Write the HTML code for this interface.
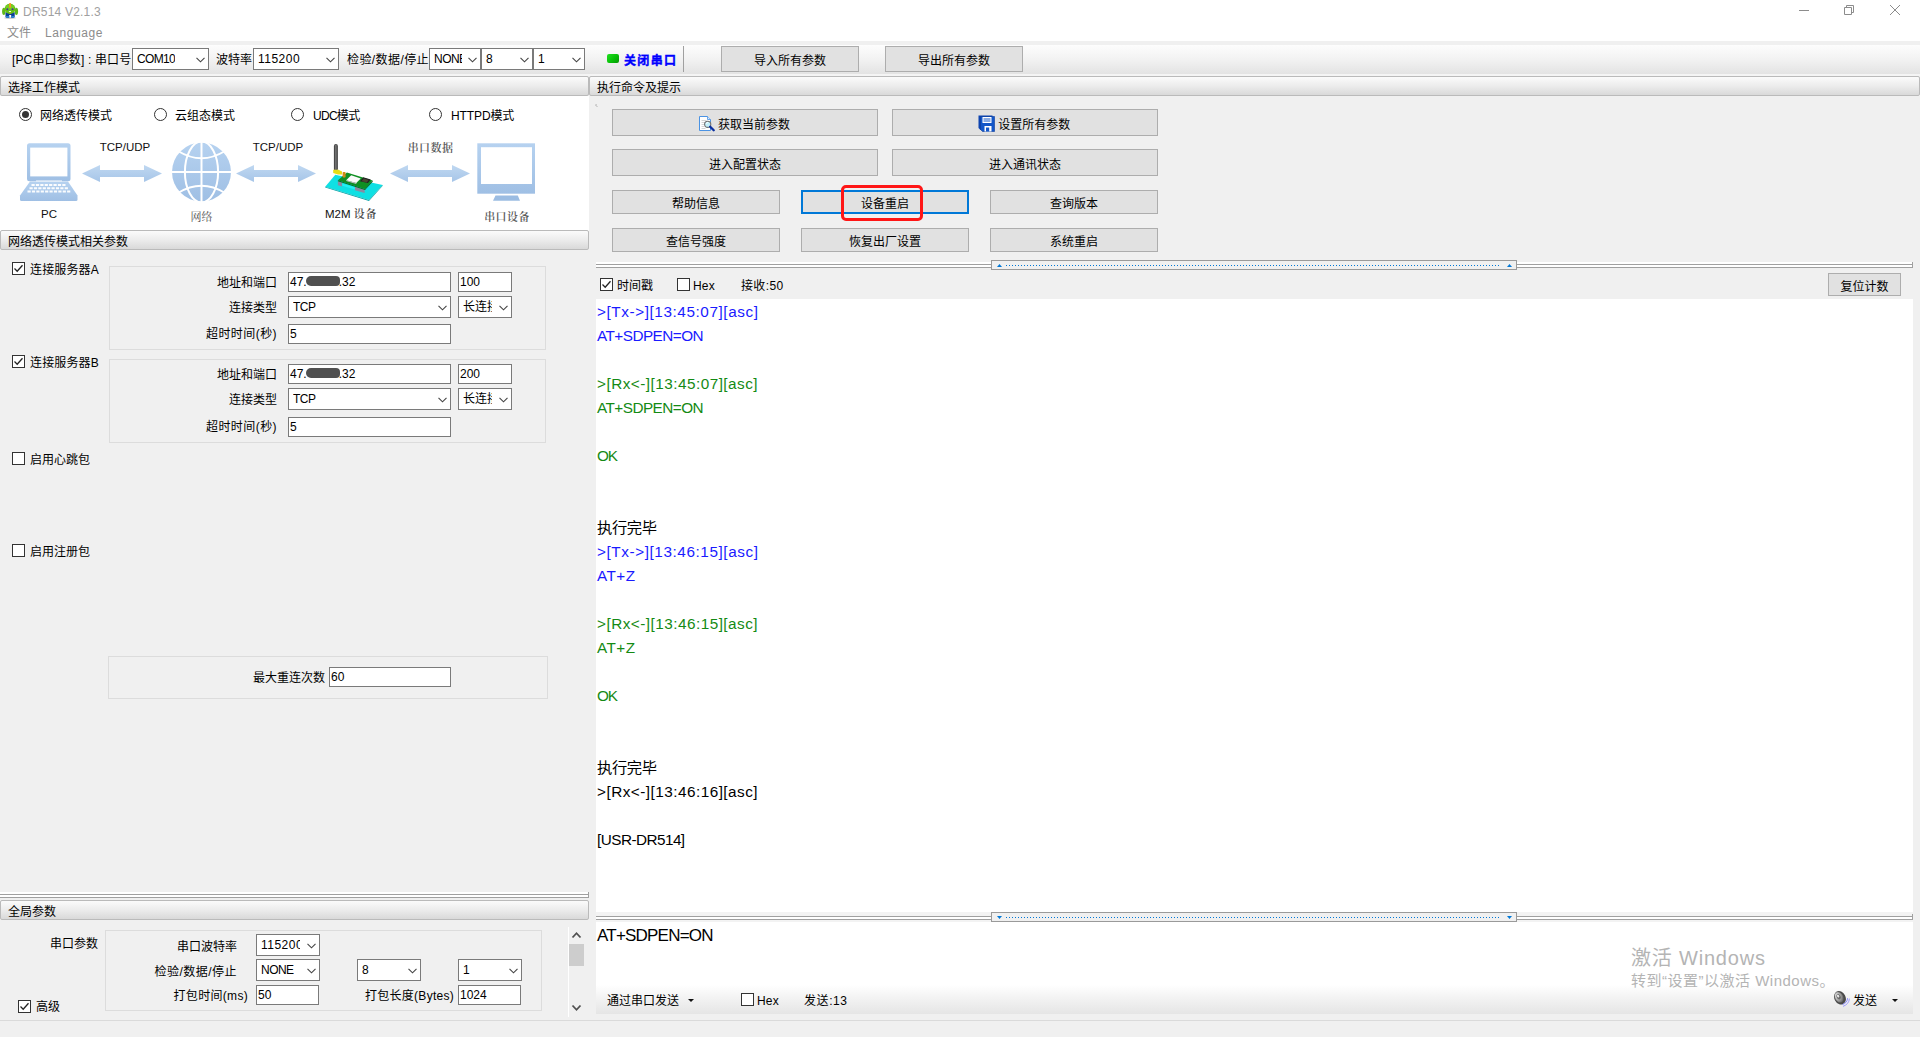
<!DOCTYPE html>
<html lang="zh-CN">
<head>
<meta charset="utf-8">
<title>DR514 V2.1.3</title>
<style>
html,body{margin:0;padding:0;}
body{width:1920px;height:1037px;position:relative;overflow:hidden;background:#f0f0f0;
 font-family:"Liberation Sans","Noto Sans CJK SC",sans-serif;font-size:12px;color:#000;}
.a{position:absolute;white-space:nowrap;}
.t{position:absolute;white-space:nowrap;font-size:12px;line-height:16px;height:16px;}
.hdr{position:absolute;height:18px;border:1px solid #bababa;border-radius:2px;
 background:linear-gradient(#fbfbfb,#ececec 50%,#d9d9d9);box-sizing:content-box;}
.hdr span{position:absolute;left:7px;top:3px;line-height:16px;font-size:12px;white-space:nowrap;}
.btn{position:absolute;box-sizing:border-box;border:1px solid #adadad;background:#e1e1e1;
 text-align:center;font-size:12px;white-space:nowrap;}
.inp{position:absolute;box-sizing:border-box;border:1px solid #7a7a7a;background:#fff;
 font-size:12px;white-space:nowrap;overflow:hidden;}
.inp span{position:absolute;left:1px;top:1px;line-height:16px;white-space:nowrap;}
.cmb span{left:4px;top:2px;overflow:hidden;}
.cmb svg{position:absolute;right:3.5px;top:8px;}
.cb{position:absolute;width:13px;height:13px;box-sizing:border-box;border:1px solid #333;background:#fff;}
.rd{position:absolute;width:13px;height:13px;box-sizing:border-box;border:1px solid #333;border-radius:50%;background:#fff;}
.rd i{position:absolute;left:2px;top:2px;width:7px;height:7px;border-radius:50%;background:#333;}
.blur{display:inline-block;width:34px;height:10px;border-radius:5px 4px 4px 5px;background:#505050;vertical-align:0px;margin:0 -1px;filter:blur(.6px);}
.grp{position:absolute;box-sizing:border-box;border:1px solid #dcdcdc;}
.log{position:absolute;left:597px;font-size:15.3px;line-height:24px;height:24px;white-space:nowrap;}
.b{color:#1a1aff;}
.g{color:#148a14;}
</style>
</head>
<body>
<!-- title bar and menu -->
<div class="a" style="left:0px;top:0px;width:1920px;height:41px;background:#fff;"></div>
<svg class="a" style="left:1px;top:2px;" width="18" height="18" viewBox="1 2 18 18">
<ellipse cx="10" cy="18" rx="6" ry="0.8" fill="#000" opacity=".25"/>
<ellipse cx="3.8" cy="11.3" rx="1.7" ry="3.6" fill="#5fb818"/>
<ellipse cx="16.4" cy="11.3" rx="1.7" ry="3.6" fill="#5fb818"/>
<path d="M5.5 12.3 H14.7 V16.5 Q14.7 17.8 13.2 17.8 H11.2 V15 H9.2 V17.8 H7 Q5.5 17.8 5.5 16.5 Z" fill="#0b3f94"/>
<path d="M5.6 16 H9.2 V17.8 H7 Q5.6 17.8 5.6 16.6 Z M11.2 16 H14.6 V16.6 Q14.6 17.8 13.2 17.8 H11.2 Z" fill="#2a7fd0"/>
<ellipse cx="10" cy="8.8" rx="5.4" ry="5.1" fill="#63c116"/>
<ellipse cx="10" cy="7" rx="4.2" ry="2.8" fill="#7ed02a" opacity=".7"/>
<rect x="9.1" y="3" width="1.9" height="4.8" rx=".6" fill="#f39a1e"/>
<circle cx="7.4" cy="9.2" r="1" fill="#4a2aa0"/><circle cx="12.5" cy="9.2" r="1" fill="#4a2aa0"/>
<rect x="8.9" y="11.1" width="2.1" height=".9" fill="#fff"/>
<rect x="9.6" y="12.2" width=".9" height="1.6" fill="#d8a018"/>
</svg>
<div class="a t" style="letter-spacing:0.21px;left:23px;top:4px;color:#a0a0a0;">DR514 V2.1.3</div>
<div class="t" style="left:7px;top:25px;color:#8c8c8c;">文件</div>
<div class="t" style="letter-spacing:0.59px;left:45px;top:25px;color:#8c8c8c;">Language</div>
<svg class="a" style="left:1790px;top:0;" width="130" height="22" viewBox="0 0 130 22" fill="none" stroke="#8c8c8c" stroke-width="1">
<path d="M9 10.5 H19"/>
<path d="M54.5 7.5 H61.5 V14.5 H54.5 Z"/><path d="M56.5 7.5 V5.5 H63.5 V12.5 H61.5"/>
<path d="M100 5 L110 15 M110 5 L100 15"/>
</svg>
<!-- toolbar -->
<div class="a" style="left:0px;top:45px;width:1920px;height:29px;background:linear-gradient(#fdfdfd,#f2f2f2 50%,#e3e3e3);"></div>
<div class="a" style="left:0px;top:74px;width:1920px;height:2px;background:#f4f4f4;"></div>
<div class="t" style="letter-spacing:0.14px;left:12px;top:52px;">[PC串口参数] : 串口号</div>
<div class="inp cmb" style="left:132px;top:48px;width:77px;height:22px;"><span style=""><b style="letter-spacing:-0.68px;font-weight:normal;">COM10</b></span><svg width="9" height="6" viewBox="0 0 9 6"><path d="M0.5 0.8 L4.5 4.8 L8.5 0.8" fill="none" stroke="#444" stroke-width="1.1"/></svg></div>
<div class="t" style="left:216px;top:52px;">波特率</div>
<div class="inp cmb" style="left:253px;top:48px;width:86px;height:22px;"><span style=""><b style="letter-spacing:0.48px;font-weight:normal;">115200</b></span><svg width="9" height="6" viewBox="0 0 9 6"><path d="M0.5 0.8 L4.5 4.8 L8.5 0.8" fill="none" stroke="#444" stroke-width="1.1"/></svg></div>
<div class="t" style="letter-spacing:0.42px;left:347px;top:52px;">检验/数据/停止</div>
<div class="inp cmb" style="left:429px;top:48px;width:52px;height:22px;"><span style="width:28px;"><b style="letter-spacing:-0.53px;font-weight:normal;">NONE</b></span><svg width="9" height="6" viewBox="0 0 9 6"><path d="M0.5 0.8 L4.5 4.8 L8.5 0.8" fill="none" stroke="#444" stroke-width="1.1"/></svg></div>
<div class="inp cmb" style="left:481px;top:48px;width:52px;height:22px;"><span style=""><b style="font-weight:normal;">8</b></span><svg width="9" height="6" viewBox="0 0 9 6"><path d="M0.5 0.8 L4.5 4.8 L8.5 0.8" fill="none" stroke="#444" stroke-width="1.1"/></svg></div>
<div class="inp cmb" style="left:533px;top:48px;width:52px;height:22px;"><span style=""><b style="font-weight:normal;">1</b></span><svg width="9" height="6" viewBox="0 0 9 6"><path d="M0.5 0.8 L4.5 4.8 L8.5 0.8" fill="none" stroke="#444" stroke-width="1.1"/></svg></div>
<div class="a" style="left:607px;top:54px;width:12px;height:9px;background:linear-gradient(135deg,#22e022,#08c008 55%,#069806);border-radius:2px;"></div>
<div class="t" style="letter-spacing:1.37px;left:624px;top:53px;color:#0000ff;font-weight:bold;-webkit-text-stroke:0.35px #0000ff;">关闭串口</div>
<div class="a" style="left:683px;top:46px;width:1px;height:26px;background:#a0a0a0;"></div>
<div class="btn" style="left:721px;top:46px;width:138px;height:26px;line-height:29px;">导入所有参数</div>
<div class="btn" style="left:885px;top:46px;width:138px;height:26px;line-height:29px;">导出所有参数</div>
<!-- section headers -->
<div class="hdr" style="left:0px;top:76px;width:587px;"><span>选择工作模式</span></div>
<div class="hdr" style="left:589px;top:76px;width:1329px;"><span>执行命令及提示</span></div>
<div class="a" style="left:0px;top:96px;width:589px;height:135px;background:#fff;"></div>
<div class="hdr" style="left:0px;top:230px;width:587px;"><span>网络透传模式相关参数</span></div>
<!-- mode radios -->
<div class="rd" style="left:19px;top:108px;"><i></i></div>
<div class="t" style="left:40px;top:108px;">网络透传模式</div>
<div class="rd" style="left:154px;top:108px;"></div>
<div class="t" style="left:175px;top:108px;">云组态模式</div>
<div class="rd" style="left:291px;top:108px;"></div>
<div class="t" style="letter-spacing:-0.71px;left:313px;top:108px;">UDC模式</div>
<div class="rd" style="left:429px;top:108px;"></div>
<div class="t" style="letter-spacing:-0.11px;left:451px;top:108px;">HTTPD模式</div>
<!-- diagram -->
<svg class="a" style="left:0;top:96px;" width="589" height="134" viewBox="0 96 589 134">
<defs>
<linearGradient id="ag" x1="0" y1="0" x2="0" y2="1"><stop offset="0" stop-color="#c0d8f1"/><stop offset="1" stop-color="#a6c5e8"/></linearGradient>
<linearGradient id="bg" x1="0" y1="0" x2="0" y2="1"><stop offset="0" stop-color="#b6d2f0"/><stop offset="1" stop-color="#9fbfe4"/></linearGradient>
</defs>
<!-- laptop -->
<rect x="27" y="143.3" width="43.5" height="38" rx="2.5" fill="url(#bg)"/>
<rect x="30.2" y="147.6" width="37.2" height="28.8" fill="#fff"/>
<path d="M30 181.5 L68 181.5 L77.5 195.5 L77.5 199.5 Q77.5 201 76 201 L21.5 201 Q20 201 20 199.5 L20 195.5 Z" fill="url(#bg)"/>
<rect x="36" y="180.3" width="26" height="1.2" fill="#fff" opacity=".7"/>
<g stroke="#fff" stroke-width="2" stroke-dasharray="3.2 1.2" opacity=".95">
<line x1="31.5" y1="185" x2="66.5" y2="185"/>
<line x1="29.5" y1="188.3" x2="68.5" y2="188.3"/>
<line x1="27.5" y1="191.6" x2="70.5" y2="191.6"/>
</g>
<!-- globe -->
<circle cx="201.5" cy="172" r="29.5" fill="url(#bg)"/>
<g fill="none" stroke="#fff" stroke-width="2">
<line x1="201.5" y1="142" x2="201.5" y2="202"/>
<line x1="171.5" y1="172" x2="231.5" y2="172"/>
<ellipse cx="201.5" cy="172" rx="16.6" ry="30.5"/>
<path d="M178 151 Q201.5 165.5 225 151"/>
<path d="M178 193 Q201.5 178.5 225 193"/>
</g>
<!-- monitor -->
<rect x="477.3" y="143.3" width="57.7" height="50.4" fill="url(#bg)"/>
<rect x="481" y="147.2" width="51" height="36.8" fill="#fff"/>
<path d="M495.5 195.6 L517.8 195.6 L520 200.8 L493 200.8 Z" fill="#9bbce2"/>
<path d="M82 173.5 L100 165.0 L100 170.0 L144 170.0 L144 165.0 L162 173.5 L144 182.0 L144 177.0 L100 177.0 L100 182.0 Z" fill="url(#ag)"/>
<path d="M236 173.5 L254 165.0 L254 170.0 L298 170.0 L298 165.0 L316 173.5 L298 182.0 L298 177.0 L254 177.0 L254 182.0 Z" fill="url(#ag)"/>
<path d="M390 173.5 L408 165.0 L408 170.0 L452 170.0 L452 165.0 L470 173.5 L452 182.0 L452 177.0 L408 177.0 L408 182.0 Z" fill="url(#ag)"/>
<!-- m2m device -->
<path d="M325.2 186.7 L335.3 174.8 L382.7 184.9 L369 200.1 Z" fill="#0fe0e3"/>
<path d="M325.2 186.7 L369 200.1 L382.7 184.9 L382.7 185.8 L369 201 L325.2 187.6 Z" fill="#07a3a8"/>
<path d="M337.9 181.3 L342.2 182.6 L342.2 186.6 L337.9 185.2 Z" fill="#8a8aa2"/>
<path d="M354.9 186.5 L364.6 189.4 L364.6 193 L354.9 190.2 Z" fill="#8a8aa2"/>
<path d="M342.2 183.4 L354.9 187.3 L354.9 189.6 L342.2 185.8 Z" fill="#22f0f4"/>
<path d="M337.9 180.2 L346.9 172.6 L372.6 180.6 L365 188.9 Z" fill="#0f8f22"/>
<path d="M337.9 180.2 L365 188.9 L365 190 L337.9 181.3 Z" fill="#0a6a18"/>
<path d="M365 188.9 L372.6 180.6 L372.6 181.8 L365 190 Z" fill="#085a14"/>
<path d="M346.2 180.2 L351.2 175.2 L360.7 178.4 L356.3 183.1 Z" fill="#fafafa"/>
<path d="M346.2 180.2 L356.3 183.1 L356.3 183.9 L346.2 181 Z" fill="#c8c0d0"/>
<path d="M359.9 181.3 L363.2 177.3 L370.8 179.5 L367.9 183.1 Z" fill="#222"/>
<path d="M361.5 181.2 L363.8 178.6 L368.6 180 L366.8 182.4 Z" fill="#4a4430"/>
<rect x="333.9" y="144" width="4" height="27" rx="2" fill="#484848"/>
<rect x="335.2" y="145" width="1.3" height="25" fill="#7a7a7a"/>
<path d="M333.2 169.8 L338.5 169.8 L342 171.4 L342 174.6 L338 174.6 L333.2 173 Z" fill="#e6de14"/>
<rect x="342.6" y="172" width="3" height="5.6" rx=".8" fill="#d08a1c"/>
<g font-family="'Liberation Sans',sans-serif" font-size="11.5" fill="#111" text-anchor="middle">
<text x="125" y="151">TCP/UDP</text>
<text x="278" y="151">TCP/UDP</text>
<text x="49" y="217.8">PC</text>
</g>
<g font-family="'Liberation Serif','Noto Serif CJK SC',serif" font-size="11" fill="#555" text-anchor="middle">
<text x="201.5" y="221">网络</text>
<text x="430.5" y="152.3" letter-spacing="0.4" font-weight="600">串口数据</text>
<text x="507" y="221.3" letter-spacing="0.4" font-weight="600">串口设备</text>
</g>
<text x="325" y="217.8" font-family="'Liberation Sans',sans-serif" font-size="11.5" fill="#111">M2M <tspan font-family="'Liberation Serif','Noto Serif CJK SC',serif" font-size="11" fill="#444" letter-spacing="0.8" font-weight="600">设备</tspan></text>
</svg>
<!-- network params -->
<div class="grp" style="left:109px;top:266px;width:437px;height:84px;"></div>
<div class="cb" style="left:12px;top:262px;"><svg width="11" height="11" viewBox="0 0 11 11" style="position:absolute;left:0;top:0"><path d="M1.5 5.5 L4.2 8.2 L9.5 2.2" fill="none" stroke="#222" stroke-width="1.3"/></svg></div>
<div class="t" style="letter-spacing:0.14px;left:30px;top:262px;">连接服务器A</div>
<div class="t" style="right:1643px;top:275px;"><span>地址和端口</span></div>
<div class="inp" style="left:288px;top:272px;width:163px;height:20px;"><span>47.<b class="blur"></b>.32</span></div>
<div class="inp" style="left:458px;top:272px;width:54px;height:20px;"><span>100</span></div>
<div class="t" style="right:1643px;top:300px;"><span>连接类型</span></div>
<div class="inp cmb" style="left:288px;top:296px;width:163px;height:22px;"><span style=""><b style="letter-spacing:-0.48px;font-weight:normal;">TCP</b></span><svg width="9" height="6" viewBox="0 0 9 6"><path d="M0.5 0.8 L4.5 4.8 L8.5 0.8" fill="none" stroke="#444" stroke-width="1.1"/></svg></div>
<div class="inp cmb" style="left:458px;top:296px;width:54px;height:22px;"><span style="width:29px;"><b style="font-weight:normal;">长连接</b></span><svg width="9" height="6" viewBox="0 0 9 6"><path d="M0.5 0.8 L4.5 4.8 L8.5 0.8" fill="none" stroke="#444" stroke-width="1.1"/></svg></div>
<div class="t" style="right:1643px;top:326px;"><span style="letter-spacing:0.43px">超时时间(秒)</span></div>
<div class="inp" style="left:288px;top:324px;width:163px;height:20px;"><span>5</span></div>
<div class="grp" style="left:109px;top:359px;width:437px;height:84px;"></div>
<div class="cb" style="left:12px;top:355px;"><svg width="11" height="11" viewBox="0 0 11 11" style="position:absolute;left:0;top:0"><path d="M1.5 5.5 L4.2 8.2 L9.5 2.2" fill="none" stroke="#222" stroke-width="1.3"/></svg></div>
<div class="t" style="letter-spacing:0.14px;left:30px;top:355px;">连接服务器B</div>
<div class="t" style="right:1643px;top:367px;"><span>地址和端口</span></div>
<div class="inp" style="left:288px;top:364px;width:163px;height:20px;"><span>47.<b class="blur"></b>.32</span></div>
<div class="inp" style="left:458px;top:364px;width:54px;height:20px;"><span>200</span></div>
<div class="t" style="right:1643px;top:392px;"><span>连接类型</span></div>
<div class="inp cmb" style="left:288px;top:388px;width:163px;height:22px;"><span style=""><b style="letter-spacing:-0.48px;font-weight:normal;">TCP</b></span><svg width="9" height="6" viewBox="0 0 9 6"><path d="M0.5 0.8 L4.5 4.8 L8.5 0.8" fill="none" stroke="#444" stroke-width="1.1"/></svg></div>
<div class="inp cmb" style="left:458px;top:388px;width:54px;height:22px;"><span style="width:29px;"><b style="font-weight:normal;">长连接</b></span><svg width="9" height="6" viewBox="0 0 9 6"><path d="M0.5 0.8 L4.5 4.8 L8.5 0.8" fill="none" stroke="#444" stroke-width="1.1"/></svg></div>
<div class="t" style="right:1643px;top:419px;"><span style="letter-spacing:0.43px">超时时间(秒)</span></div>
<div class="inp" style="left:288px;top:417px;width:163px;height:20px;"><span>5</span></div>
<div class="cb" style="left:12px;top:452px;"></div>
<div class="t" style="left:30px;top:452px;">启用心跳包</div>
<div class="cb" style="left:12px;top:544px;"></div>
<div class="t" style="left:30px;top:544px;">启用注册包</div>
<div class="grp" style="left:108px;top:656px;width:440px;height:43px;"></div>
<div class="t" style="right:1595px;top:670px;"><span>最大重连次数</span></div>
<div class="inp" style="left:329px;top:667px;width:122px;height:20px;"><span>60</span></div>
<div class="a" style="left:0px;top:892px;width:589px;height:6px;background:#fff;border-right:1px solid #a0a0a0;box-sizing:border-box;"></div>
<div class="a" style="left:0px;top:894px;width:589px;height:1px;background:#a0a0a0;"></div>
<div class="a" style="left:0px;top:895px;width:588px;height:2px;background:#fff;"></div>
<div class="a" style="left:0px;top:897px;width:589px;height:1px;background:#a0a0a0;"></div>
<div class="hdr" style="left:0px;top:900px;width:587px;"><span>全局参数</span></div>
<div class="t" style="left:50px;top:936px;">串口参数</div>
<div class="grp" style="left:105px;top:930px;width:437px;height:81px;"></div>
<div class="t" style="right:1683px;top:939px;"><span>串口波特率</span></div>
<div class="inp cmb" style="left:256px;top:934px;width:64px;height:22px;"><span style="width:39px;"><b style="letter-spacing:0.48px;font-weight:normal;">115200</b></span><svg width="9" height="6" viewBox="0 0 9 6"><path d="M0.5 0.8 L4.5 4.8 L8.5 0.8" fill="none" stroke="#444" stroke-width="1.1"/></svg></div>
<div class="t" style="right:1683px;top:964px;"><span style="letter-spacing:0.48px">检验/数据/停止</span></div>
<div class="inp cmb" style="left:256px;top:959px;width:64px;height:22px;"><span style=""><b style="letter-spacing:-0.53px;font-weight:normal;">NONE</b></span><svg width="9" height="6" viewBox="0 0 9 6"><path d="M0.5 0.8 L4.5 4.8 L8.5 0.8" fill="none" stroke="#444" stroke-width="1.1"/></svg></div>
<div class="inp cmb" style="left:357px;top:959px;width:64px;height:22px;"><span style=""><b style="font-weight:normal;">8</b></span><svg width="9" height="6" viewBox="0 0 9 6"><path d="M0.5 0.8 L4.5 4.8 L8.5 0.8" fill="none" stroke="#444" stroke-width="1.1"/></svg></div>
<div class="inp cmb" style="left:458px;top:959px;width:64px;height:22px;"><span style=""><b style="font-weight:normal;">1</b></span><svg width="9" height="6" viewBox="0 0 9 6"><path d="M0.5 0.8 L4.5 4.8 L8.5 0.8" fill="none" stroke="#444" stroke-width="1.1"/></svg></div>
<div class="t" style="right:1672px;top:988px;"><span style="letter-spacing:0.31px">打包时间(ms)</span></div>
<div class="inp" style="left:256px;top:985px;width:63px;height:20px;"><span>50</span></div>
<div class="t" style="right:1466px;top:988px;"><span style="letter-spacing:0.27px">打包长度(Bytes)</span></div>
<div class="inp" style="left:458px;top:985px;width:63px;height:20px;"><span>1024</span></div>
<div class="cb" style="left:18px;top:1000px;"><svg width="11" height="11" viewBox="0 0 11 11" style="position:absolute;left:0;top:0"><path d="M1.5 5.5 L4.2 8.2 L9.5 2.2" fill="none" stroke="#222" stroke-width="1.3"/></svg></div>
<div class="t" style="left:36px;top:999px;">高级</div>
<div class="a" style="left:568px;top:927px;width:1px;height:90px;background:#fff;"></div>
<div class="a" style="left:569px;top:944px;width:15px;height:22px;background:#cdcdcd;"></div>
<svg class="a" style="left:571px;top:931px;" width="11" height="8" viewBox="0 0 11 8"><path d="M1.5 6.5 L5.5 2.2 L9.5 6.5" fill="none" stroke="#505050" stroke-width="1.8"/></svg>
<svg class="a" style="left:571px;top:1004px;" width="11" height="8" viewBox="0 0 11 8"><path d="M1.5 1.5 L5.5 5.8 L9.5 1.5" fill="none" stroke="#505050" stroke-width="1.8"/></svg>
<div class="a" style="left:0px;top:1020px;width:1920px;height:1px;background:#dadada;"></div>
<!-- command buttons -->
<div class="a" style="left:595px;top:104px;width:2px;height:2px;background:#cecece;border-radius:1px 0 0 0;"></div>
<div class="a" style="left:596px;top:106px;width:2px;height:1px;background:#d2d2d2;"></div>
<div class="btn" style="left:612px;top:109px;width:266px;height:27px;line-height:30px;"><svg width="16" height="16" viewBox="0 0 16 16" style="vertical-align:-3px;margin-right:3px;margin-left:-1px"><path d="M0.5 0.5 H8.5 L11.5 3.5 V14.5 H0.5 Z" fill="#fff" stroke="#4b93e3" stroke-width="1"/><path d="M8.5 0.5 V3.5 H11.5" fill="#dbe9fa" stroke="#4b93e3" stroke-width=".8"/><path d="M2.5 4.5h5M2.5 6.5h5M2.5 8.5h3M2.5 10.5h3M2.5 12.5h4" stroke="#d4d4d4" stroke-width="1"/><circle cx="8.7" cy="8.3" r="3.1" fill="#c4f0fb" stroke="#707070" stroke-width="1.1"/><path d="M7 7.5 L9 6.3" stroke="#fff" stroke-width="1"/><path d="M11.2 10.8 L14.7 14.3" stroke="#0a2fa0" stroke-width="2.3" stroke-linecap="round"/></svg>获取当前参数</div>
<div class="btn" style="left:892px;top:109px;width:266px;height:27px;line-height:30px;"><svg width="17" height="17" viewBox="0 0 17 17" style="vertical-align:-3px;margin-right:3px;margin-left:-1.5px"><path d="M0.5 0.5 H14.5 V13 L12.5 15 H2.5 L0.5 13 Z" fill="#0e44b0"/><path d="M2.5 1.5 H16.5 V16.5 H4.5 L2.5 14.5 Z" fill="#1256c8" stroke="#0a3a9a" stroke-width=".6"/><rect x="4.5" y="2" width="9" height="6" fill="#fff"/><path d="M5.5 4h7M5.5 6h7" stroke="#1256c8" stroke-width="1"/><rect x="6.5" y="11" width="7" height="5.5" fill="#fff"/><rect x="8" y="12.5" width="3.2" height="4" fill="#1256c8"/></svg>设置所有参数</div>
<div class="btn" style="left:612px;top:149px;width:266px;height:27px;line-height:30px;">进入配置状态</div>
<div class="btn" style="left:892px;top:149px;width:266px;height:27px;line-height:30px;">进入通讯状态</div>
<div class="btn" style="left:612px;top:190px;width:168px;height:24px;line-height:26px;">帮助信息</div>
<div class="btn" style="left:801px;top:190px;width:168px;height:24px;line-height:24px;border:2px solid #0078d7;">设备重启</div>
<div class="btn" style="left:990px;top:190px;width:168px;height:24px;line-height:26px;">查询版本</div>
<div class="btn" style="left:612px;top:228px;width:168px;height:24px;line-height:26px;">查信号强度</div>
<div class="btn" style="left:801px;top:228px;width:168px;height:24px;line-height:26px;">恢复出厂设置</div>
<div class="btn" style="left:990px;top:228px;width:168px;height:24px;line-height:26px;">系统重启</div>
<div class="a" style="left:841px;top:185px;width:82px;height:36px;box-sizing:border-box;border:3px solid #ff1616;border-radius:5px;"></div>
<div class="a" style="left:596px;top:262px;width:1317px;height:6px;background:#fff;border-right:1px solid #a0a0a0;box-sizing:border-box;"></div>
<div class="a" style="left:596px;top:264px;width:1317px;height:1px;background:#a0a0a0;"></div>
<div class="a" style="left:596px;top:265px;width:1316px;height:2px;background:#fff;"></div>
<div class="a" style="left:596px;top:267px;width:1317px;height:1px;background:#a0a0a0;"></div>
<div class="a" style="left:991px;top:260px;width:526px;height:10px;background:#f0f0f0;box-sizing:border-box;border:1px solid #9a9a9a;"></div>
<div class="a" style="left:1006px;top:265px;width:494px;height:1px;background:repeating-linear-gradient(90deg,#0078d7 0 1px,transparent 1px 3px);"></div>
<svg class="a" style="left:997px;top:264px;" width="5" height="3" viewBox="0 0 5 3"><path d="M0 3 L2.5 0 L5 3 Z" fill="#0078d7"/></svg>
<svg class="a" style="left:1507px;top:264px;" width="5" height="3" viewBox="0 0 5 3"><path d="M0 3 L2.5 0 L5 3 Z" fill="#0078d7"/></svg>
<div class="cb" style="left:600px;top:278px;"><svg width="11" height="11" viewBox="0 0 11 11" style="position:absolute;left:0;top:0"><path d="M1.5 5.5 L4.2 8.2 L9.5 2.2" fill="none" stroke="#222" stroke-width="1.3"/></svg></div>
<div class="t" style="left:617px;top:278px;">时间戳</div>
<div class="cb" style="left:677px;top:278px;"></div>
<div class="t" style="letter-spacing:0.18px;left:693px;top:278px;">Hex</div>
<div class="t" style="letter-spacing:0.36px;left:741px;top:278px;">接收:50</div>
<div class="btn" style="left:1828px;top:273px;width:73px;height:23px;line-height:26px;">复位计数</div>
<!-- log area -->
<div class="a" style="left:596px;top:299px;width:1317px;height:613px;background:#fff;"></div>
<div class="a" style="left:596px;top:912px;width:1317px;height:10px;background:#f3f3f3;"></div>
<div class="a" style="left:596px;top:922px;width:1317px;height:63px;background:#fff;"></div>
<div class="a" style="left:596px;top:985px;width:1317px;height:29px;background:linear-gradient(#fff,#f4f4f4 40%,#e5e5e5);"></div>
<div class="log b" style="letter-spacing:0.58px;left:597px;top:300px;">&gt;[Tx-&gt;][13:45:07][asc]</div>
<div class="log b" style="letter-spacing:-0.53px;left:597px;top:324px;">AT+SDPEN=ON</div>
<div class="log g" style="letter-spacing:0.48px;left:597px;top:372px;">&gt;[Rx&lt;-][13:45:07][asc]</div>
<div class="log g" style="letter-spacing:-0.53px;left:597px;top:396px;">AT+SDPEN=ON</div>
<div class="log g" style="letter-spacing:-1.14px;left:597px;top:444px;">OK</div>
<div class="log" style="letter-spacing:-0.4px;left:597px;top:516px;">执行完毕</div>
<div class="log b" style="letter-spacing:0.58px;left:597px;top:540px;">&gt;[Tx-&gt;][13:46:15][asc]</div>
<div class="log b" style="letter-spacing:0.46px;left:597px;top:564px;">AT+Z</div>
<div class="log g" style="letter-spacing:0.48px;left:597px;top:612px;">&gt;[Rx&lt;-][13:46:15][asc]</div>
<div class="log g" style="letter-spacing:0.46px;left:597px;top:636px;">AT+Z</div>
<div class="log g" style="letter-spacing:-1.14px;left:597px;top:684px;">OK</div>
<div class="log" style="letter-spacing:-0.4px;left:597px;top:756px;">执行完毕</div>
<div class="log" style="letter-spacing:0.48px;left:597px;top:780px;">&gt;[Rx&lt;-][13:46:16][asc]</div>
<div class="log" style="letter-spacing:-0.54px;left:597px;top:828px;">[USR-DR514]</div>
<div class="a" style="left:596px;top:914px;width:1317px;height:6px;background:#f3f3f3;border-right:1px solid #a0a0a0;box-sizing:border-box;"></div>
<div class="a" style="left:596px;top:916px;width:1317px;height:1px;background:#a0a0a0;"></div>
<div class="a" style="left:596px;top:917px;width:1316px;height:2px;background:#fff;"></div>
<div class="a" style="left:596px;top:919px;width:1317px;height:1px;background:#a0a0a0;"></div>
<div class="a" style="left:991px;top:912px;width:526px;height:10px;background:#f0f0f0;box-sizing:border-box;border:1px solid #9a9a9a;"></div>
<div class="a" style="left:1006px;top:917px;width:494px;height:1px;background:repeating-linear-gradient(90deg,#0078d7 0 1px,transparent 1px 3px);"></div>
<svg class="a" style="left:997px;top:916px;" width="5" height="3" viewBox="0 0 5 3"><path d="M0 0 L5 0 L2.5 3 Z" fill="#0078d7"/></svg>
<svg class="a" style="left:1507px;top:916px;" width="5" height="3" viewBox="0 0 5 3"><path d="M0 0 L5 0 L2.5 3 Z" fill="#0078d7"/></svg>
<div class="a" style="letter-spacing:-0.79px;left:597px;top:926px;font-size:17px;line-height:20px;">AT+SDPEN=ON</div>
<div class="t" style="left:607px;top:993px;">通过串口发送</div>
<svg class="a" style="left:688px;top:999px;" width="6" height="3" viewBox="0 0 6 3"><path d="M0 0 L6 0 L3 3 Z" fill="#111"/></svg>
<div class="cb" style="left:741px;top:993px;"></div>
<div class="t" style="letter-spacing:0.18px;left:757px;top:993px;">Hex</div>
<div class="t" style="letter-spacing:0.58px;left:804px;top:993px;">发送:13</div>
<div class="a" style="letter-spacing:0.8px;left:1631px;top:946px;font-size:20px;line-height:24px;color:#b4b4b4;">激活 Windows</div>
<div class="a" style="letter-spacing:0.5px;left:1631px;top:972px;font-size:15px;line-height:18px;color:#b4b4b4;">转到“设置”以激活 Windows。</div>
<svg class="a" style="left:1832px;top:990px;" width="20" height="18" viewBox="0 0 20 18"><defs><radialGradient id="sp" cx=".35" cy=".3" r=".75"><stop offset="0" stop-color="#f0f0f0"/><stop offset=".55" stop-color="#a4a4a4"/><stop offset="1" stop-color="#5a5a5a"/></radialGradient></defs><ellipse cx="8" cy="7.8" rx="5.6" ry="7" fill="#4a4a4a" transform="rotate(-28 8 7.8)"/><ellipse cx="7.2" cy="7.3" rx="4.1" ry="5.6" fill="url(#sp)" transform="rotate(-28 7.2 7.3)"/><ellipse cx="6.6" cy="6.8" rx="2" ry="2.8" fill="#6a6a6a" transform="rotate(-28 6.6 6.8)"/><ellipse cx="6.1" cy="6.1" rx="1.1" ry="1.5" fill="#eaeaea" transform="rotate(-28 6.1 6.1)"/><path d="M10.5 14.5 Q15.2 12.8 15.6 8.2" fill="none" stroke="#8a8aff" stroke-width="1"/><path d="M11 16.4 Q17 14.2 17.4 8.6" fill="none" stroke="#9c9cff" stroke-width="1"/></svg>
<div class="t" style="left:1853px;top:993px;">发送</div>
<svg class="a" style="left:1892px;top:999px;" width="6" height="3" viewBox="0 0 6 3"><path d="M0 0 L6 0 L3 3 Z" fill="#111"/></svg>
</body>
</html>
